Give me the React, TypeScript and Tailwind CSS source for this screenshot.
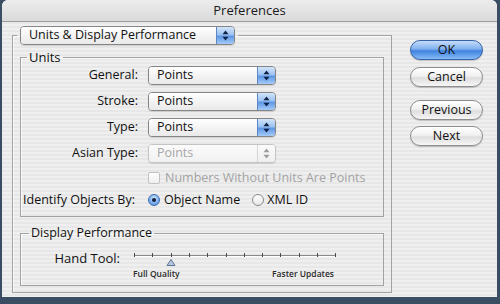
import React from 'react';

const stripes =
  'bg-[repeating-linear-gradient(180deg,#efefef_0px,#efefef_2px,#e7e7e7_2px,#e7e7e7_4px)]';

const Arrows: React.FC<{ color: string }> = ({ color }) => (
  <svg width="7" height="11" viewBox="0 0 7 11">
    <path d="M3.5 0.5 L6.5 4.2 L0.5 4.2 Z" fill={color} />
    <path d="M3.5 10.5 L6.5 6.8 L0.5 6.8 Z" fill={color} />
  </svg>
);

const Popup: React.FC<{ label: string; disabled?: boolean; wide?: boolean }> = ({ label, disabled, wide }) => (
  <div
    className={`flex h-[19px] ${wide ? 'w-[215px]' : 'w-[128px]'} rounded-[4px] border ${
      disabled ? 'border-[#c4c4c4]' : 'border-[#858585]'
    } overflow-hidden shadow-[0_1px_1px_rgba(0,0,0,0.12)]`}
  >
    <div
      className={`flex-1 flex items-center pl-[8px] text-[12.5px] leading-none ${
        disabled
          ? 'text-[#a6a6a6] bg-[linear-gradient(180deg,#fbfbfb,#f1f1f1)]'
          : 'text-[#111] bg-[linear-gradient(180deg,#ffffff_0%,#f4f4f4_50%,#e9e9e9_100%)]'
      }`}
    >
      {label}
    </div>
    {disabled ? (
      <div className="w-[18px] flex items-center justify-center border-l border-[#d6d6d6] bg-[linear-gradient(180deg,#fbfbfb,#efefef)]">
        <Arrows color="#9c9c9c" />
      </div>
    ) : (
      <div className="w-[18px] flex items-center justify-center border-l border-[#5b86c4] bg-[linear-gradient(180deg,#d3e4fa_0%,#9dc2f2_45%,#5f97e4_55%,#a5cbf8_100%)]">
        <Arrows color="#0e2246" />
      </div>
    )}
  </div>
);

const AquaButton: React.FC<{ label: string; primary?: boolean; className?: string }> = ({ label, primary, className }) => (
  <div
    className={`h-[20px] w-[73px] rounded-full border flex items-center justify-center text-[12.5px] text-[#111] ${
      primary
        ? 'border-[#3563a8] bg-[linear-gradient(180deg,#c6dcfa_0%,#7fb0ef_45%,#3f82de_55%,#86bcf8_100%)]'
        : 'border-[#8d8d8d] bg-[linear-gradient(180deg,#ffffff_0%,#f1f1f1_45%,#dedede_55%,#f6f6f6_100%)]'
    } shadow-[0_1px_1px_rgba(0,0,0,0.2)] ${className ?? ''}`}
  >
    {label}
  </div>
);

const Radio: React.FC<{ checked?: boolean }> = ({ checked }) =>
  checked ? (
    <div className="w-[12px] h-[12px] rounded-full border border-[#3d6cb0] bg-[radial-gradient(circle_at_50%_35%,#d7e8fc_0%,#7fb0ee_55%,#4c87d8_100%)] flex items-center justify-center">
      <div className="w-[4px] h-[4px] rounded-full bg-[#0f1e3a]" />
    </div>
  ) : (
    <div className="w-[12px] h-[12px] rounded-full border border-[#8a8a8a] bg-[linear-gradient(180deg,#ffffff,#e6e6e6)]" />
  );

const Slider: React.FC = () => {
  const ticks = Array.from({ length: 12 }, (_, i) => 4 + i * 18.3);
  return (
    <svg width="212" height="17" viewBox="0 0 212 17">
      <line x1="4" y1="5.5" x2="205.3" y2="5.5" stroke="#8a8a8a" strokeWidth="1" />
      <line x1="4" y1="6.5" x2="205.3" y2="6.5" stroke="#ffffff" strokeWidth="1" />
      {ticks.map((x) => (
        <line key={x} x1={Math.round(x) + 0.5} y1="3" x2={Math.round(x) + 0.5} y2="7" stroke="#4a4a4a" strokeWidth="1" />
      ))}
      <path d="M41 9.5 L45 15.5 L37 15.5 Z" fill="#b6c6de" stroke="#5f7396" strokeWidth="1" />
    </svg>
  );
};

export default function App() {
  return (
    <div className="w-[500px] h-[304px] bg-[#3a4d62] pl-[2px] pr-[3px] pb-[7px] font-['Lucida_Grande','Open_Sans',sans-serif] text-[12.5px] text-[#111]">
      <div className={`h-full flex flex-col rounded-t-[6px] overflow-hidden ${stripes}`}>
        {/* Title bar */}
        <div className="h-[22px] flex items-center justify-center border-b border-[#9c9c9c] bg-[linear-gradient(180deg,#ececec_0%,#dadada_100%)] text-[13px] text-[#1a1a1a]">
          Preferences
        </div>

        <div className="flex flex-1">
          {/* Left panel */}
          <div className="ml-[10px] mt-[4px]">
            <fieldset className="w-[380px] border border-[#a2a2a2] shadow-[inset_1px_1px_0_#fafafa] px-0 pb-[6px]">
              <legend className="ml-[4px] px-[3px]">
                <Popup label="Units & Display Performance" wide />
              </legend>

              <fieldset className="mx-[7px] mt-[4px] border border-[#a2a2a2] shadow-[inset_1px_1px_0_#fafafa] pb-[8px]">
                <legend className="ml-[6px] px-[2px] h-[16px] leading-[16px] text-[13px]">Units</legend>
                <div className="flex flex-col gap-[7px] mt-[1px]">
                  {[
                    ['General:', false],
                    ['Stroke:', false],
                    ['Type:', false],
                    ['Asian Type:', true],
                  ].map(([label, disabled]) => (
                    <div key={label as string} className="flex items-center">
                      <div className="w-[117px] text-right">{label as string}</div>
                      <div className="ml-[10px]">
                        <Popup label="Points" disabled={disabled as boolean} />
                      </div>
                    </div>
                  ))}
                </div>
                <div className="flex items-center mt-[8px] h-[14px] ml-[127px]">
                  <div className="w-[12px] h-[12px] rounded-[2px] border border-[#c2c2c2] bg-[linear-gradient(180deg,#ffffff,#f0f0f0)]" />
                  <span className="ml-[5px] text-[#a3a3a3]">Numbers Without Units Are Points</span>
                </div>
                <div className="flex items-center mt-[7px] h-[16px]">
                  <div className="w-[114px] text-right whitespace-nowrap">Identify Objects By:</div>
                  <div className="ml-[13px] flex items-center">
                    <Radio checked />
                    <span className="ml-[4px]">Object Name</span>
                    <div className="ml-[12px]">
                      <Radio />
                    </div>
                    <span className="ml-[3px]">XML ID</span>
                  </div>
                </div>
              </fieldset>

              <fieldset className="mx-[7px] mt-[8px] border border-[#a2a2a2] shadow-[inset_1px_1px_0_#fafafa] pt-[9px] pb-[5px]">
                <legend className="ml-[8px] px-[2px] h-[16px] leading-[16px] text-[12.5px]">Display Performance</legend>
                <div className="flex items-start">
                  <div className="w-[99px] h-[17px] leading-[17px] text-right text-[13px]">Hand Tool:</div>
                  <div className="ml-[10px] flex flex-col">
                    <Slider />
                    <div className="mt-[1px] ml-[3px] w-[201px] h-[12px] flex justify-between items-center text-[8.5px] font-semibold text-[#2a2a2a]">
                      <span>Full Quality</span>
                      <span>Faster Updates</span>
                    </div>
                  </div>
                </div>
              </fieldset>
            </fieldset>
          </div>

          {/* Buttons */}
          <div className="ml-[18px] pt-[18px] flex flex-col">
            <AquaButton label="OK" primary />
            <AquaButton label="Cancel" className="mt-[7px]" />
            <AquaButton label="Previous" className="mt-[13px]" />
            <AquaButton label="Next" className="mt-[6px]" />
          </div>
        </div>
      </div>
    </div>
  );
}
